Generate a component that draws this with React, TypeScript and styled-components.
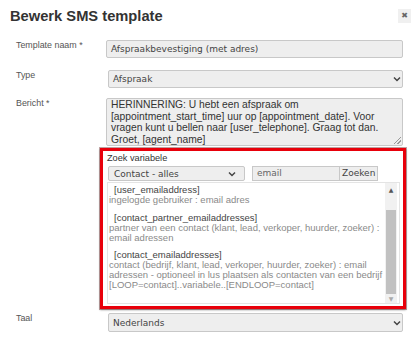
import React from "react";
import styled, { createGlobalStyle } from "styled-components";

const GlobalStyle = createGlobalStyle`
    html, body {
        margin: 0;
        padding: 0;
        background: #ffffff;
    }
    body {
        font-family: "Liberation Sans", Arial, sans-serif;
        color: #333;
    }
    * {
        box-sizing: border-box;
    }
`;

type Variable = {
    key: string;
    lines: string[];
};

const variables: Variable[] = [
    {
        key: "[user_emailaddress]",
        lines: ["ingelogde gebruiker : email adres"],
    },
    {
        key: "[contact_partner_emailaddresses]",
        lines: [
            "partner van een contact (klant, lead, verkoper, huurder, zoeker) :",
            "email adressen",
        ],
    },
    {
        key: "[contact_emailaddresses]",
        lines: [
            "contact (bedrijf, klant, lead, verkoper, huurder, zoeker) : email",
            "adressen - optioneel in lus plaatsen als contacten van een bedrijf",
            "[LOOP=contact]..variabele..[ENDLOOP=contact]",
        ],
    },
];

const message = [
    "HERINNERING: U hebt een afspraak om",
    "[appointment_start_time] uur op [appointment_date]. Voor",
    "vragen kunt u bellen naar [user_telephone]. Graag tot dan.",
    "Groet, [agent_name]",
];

const Chevron = () => (
    <svg width="8" height="6" viewBox="0 0 8 6">
        <path d="M1 1.5 L4 4.5 L7 1.5" stroke="#444" strokeWidth="1.5" fill="none" />
    </svg>
);

const App = () => {
    return (
        <>
            <GlobalStyle />
            <Dialog>
                <Header>
                    <Title>Bewerk SMS template</Title>
                    <CloseButton>✖</CloseButton>
                </Header>

                <Row $mb={12}>
                    <Label>Template naam *</Label>
                    <TextInput>Afspraakbevestiging (met adres)</TextInput>
                </Row>

                <Row $mb={10}>
                    <Label>Type</Label>
                    <Select>
                        <span>Afspraak</span>
                        <Chevron />
                    </Select>
                </Row>

                <Row $mb={2}>
                    <Label>Bericht *</Label>
                    <TextArea>
                        {message.map((line) => (
                            <div key={line}>{line}</div>
                        ))}
                        <Grip />
                    </TextArea>
                </Row>

                <Row $mb={4}>
                    <span />
                    <Highlight>
                        <SearchLabel>Zoek variabele</SearchLabel>
                        <SearchRow>
                            <SmallSelect>
                                <span>Contact - alles</span>
                                <Chevron />
                            </SmallSelect>
                            <SearchGroup>
                                <SmallInput>email</SmallInput>
                                <SmallButton>Zoeken</SmallButton>
                            </SearchGroup>
                        </SearchRow>
                        <ListBox>
                            <ListContent>
                                {variables.map((v) => (
                                    <Item key={v.key}>
                                        <ItemKey>{v.key}</ItemKey>
                                        {v.lines.map((l) => (
                                            <ItemText key={l}>{l}</ItemText>
                                        ))}
                                    </Item>
                                ))}
                            </ListContent>
                            <ScrollTrack>
                                <ScrollArrow>▲</ScrollArrow>
                                <ScrollThumb />
                                <ScrollArrow $faded>▼</ScrollArrow>
                            </ScrollTrack>
                        </ListBox>
                    </Highlight>
                </Row>

                <Row>
                    <Label>Taal</Label>
                    <Select $h={19}>
                        <span>Nederlands</span>
                        <Chevron />
                    </Select>
                </Row>
            </Dialog>
        </>
    );
};

const Dialog = styled.div`
    width: 411px;
    height: 347px;
    background: #fff;
    overflow: hidden;
`;

const Header = styled.div`
    display: flex;
    align-items: flex-start;
    justify-content: space-between;
    height: 40px;
    padding: 7px 0 0 10px;
`;

const Title = styled.h1`
    margin: 0;
    font-size: 14.7px;
    font-weight: 700;
    color: #333;
    line-height: 18px;
`;

const CloseButton = styled.div`
    width: 13px;
    height: 14px;
    margin-top: 2px;
    background: #f0f0f0;
    color: #666;
    font-size: 8px;
    line-height: 14px;
    text-align: center;
    font-family: "DejaVu Sans", sans-serif;
`;

const Row = styled.div<{ $mb?: number }>`
    display: grid;
    grid-template-columns: 106px 297px;
    align-items: start;
    margin-bottom: ${({ $mb }) => $mb ?? 0}px;
`;

const Label = styled.div`
    padding-left: 16px;
    font-size: 8.9px;
    color: #555;
    line-height: 10px;
`;

const fieldBase = `
    background: #eeeeee;
    border: 1px solid #c8c8c8;
    border-radius: 2px;
    color: #444;
    font-family: "DejaVu Sans", Verdana, sans-serif;
    font-size: 9px;
    white-space: nowrap;
`;

const TextInput = styled.div`
    ${fieldBase}
    height: 18px;
    padding: 0 4px;
    line-height: 16px;
`;

const Select = styled.div<{ $h?: number }>`
    ${fieldBase}
    display: flex;
    align-items: center;
    justify-content: space-between;
    height: ${({ $h }) => $h ?? 18}px;
    margin-left: 2px;
    padding: 0 1px 0 4px;
`;

const TextArea = styled.div`
    position: relative;
    background: #eeeeee;
    border: 1px solid #c8c8c8;
    border-radius: 2px;
    height: 48px;
    padding: 0 4px;
    font-size: 10.3px;
    line-height: 11.6px;
    color: #333;
    white-space: nowrap;
`;

const Grip = styled.div`
    position: absolute;
    right: 1px;
    bottom: 1px;
    width: 7px;
    height: 7px;
    background: linear-gradient(
        135deg,
        transparent 45%,
        #999 45%,
        #999 55%,
        transparent 55%,
        transparent 70%,
        #999 70%,
        #999 80%,
        transparent 80%
    );
`;

const Highlight = styled.div`
    margin-left: -6px;
    margin-right: -3px;
    height: 161px;
    border: 3px solid #e8000b;
    box-shadow: 0 0 0 1px rgba(80, 0, 0, 0.35), 0 1px 2px rgba(0, 0, 0, 0.4);
    padding: 2px 3px 2px 4px;
    display: flex;
    flex-direction: column;
`;

const SearchLabel = styled.div`
    font-size: 9.2px;
    color: #333;
    line-height: 11px;
`;

const SearchRow = styled.div`
    display: flex;
    align-items: center;
    gap: 7px;
    height: 15px;
    margin-top: 2px;
    padding-left: 1px;
`;

const SmallSelect = styled.div`
    ${fieldBase}
    display: flex;
    align-items: center;
    justify-content: space-between;
    width: 137px;
    height: 15px;
    padding: 0 8px 0 5px;
`;

const SearchGroup = styled.div`
    display: flex;
`;

const SmallInput = styled.div`
    ${fieldBase}
    width: 88px;
    height: 15px;
    padding: 0 4px;
    line-height: 13px;
    color: #666;
    border-radius: 0;
`;

const SmallButton = styled.div`
    ${fieldBase}
    height: 15px;
    padding: 0 2px 0 2px;
    line-height: 13px;
    border-left: none;
    border-radius: 0;
`;

const ListBox = styled.div`
    flex: 1;
    display: flex;
    margin-top: 1px;
    border: 1px solid #e4e4e4;
    background: #fff;
    overflow: hidden;
`;

const ListContent = styled.div`
    flex: 1;
    padding: 2px 0 0 1px;
    display: flex;
    flex-direction: column;
    gap: 7.5px;
`;

const Item = styled.div`
    display: flex;
    flex-direction: column;
`;

const ItemKey = styled.div`
    font-size: 9.5px;
    line-height: 10px;
    color: #444;
    padding-left: 5px;
`;

const ItemText = styled.div`
    font-size: 9.5px;
    line-height: 10px;
    color: #8a8a8a;
    white-space: nowrap;
`;

const ScrollTrack = styled.div`
    width: 12px;
    background: #f1f1f1;
    display: flex;
    flex-direction: column;
    align-items: center;
    margin-right: 2px;
`;

const ScrollArrow = styled.div<{ $faded?: boolean }>`
    font-size: 6px;
    color: ${({ $faded }) => ($faded ? "#aaa" : "#555")};
    height: ${({ $faded }) => ($faded ? 9 : 13)}px;
    line-height: ${({ $faded }) => ($faded ? 9 : 13)}px;
    font-family: "DejaVu Sans", sans-serif;
`;

const ScrollThumb = styled.div`
    width: 10px;
    height: 84px;
    margin-top: 14px;
    margin-bottom: auto;
    background: #c1c1c1;
`;

export default App;
